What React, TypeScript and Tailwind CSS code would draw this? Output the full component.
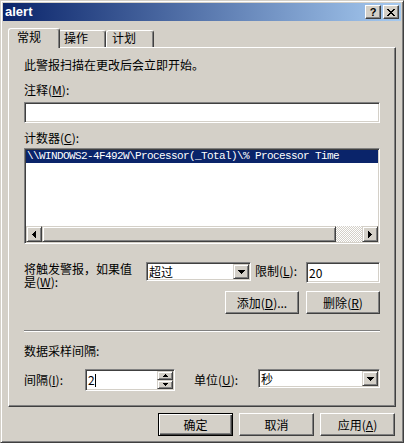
const cjk = "font-['Noto_Sans_CJK_SC',sans-serif] text-[12px] leading-[12px] text-black"
const sunken =
  "border border-t-[#808080] border-l-[#808080] border-r-white border-b-white shadow-[inset_1px_1px_0_#404040,inset_-1px_-1px_0_#d4d0c8]"
const bevel =
  "border border-t-[#d4d0c8] border-l-[#d4d0c8] border-r-[#404040] border-b-[#404040] bg-[#d4d0c8] shadow-[inset_1px_1px_0_#ffffff,inset_-1px_-1px_0_#808080]"
const pushButton =
  "flex items-center justify-center border border-t-white border-l-white border-r-[#404040] border-b-[#404040] bg-[#d4d0c8] shadow-[inset_-1px_-1px_0_#808080]"

// pixel glyphs for the little arrows
const DOWN = "M0 0h7v1H0zM1 1h5v1H1zM2 2h3v1H2zM3 3h1v1H3z"
const LEFT = "M3 0h1v7H3zM2 1h1v5H2zM1 2h1v3H1zM0 3h1v1H0z"
const RIGHT = "M0 0h1v7H0zM1 1h1v5H1zM2 2h1v3H2zM3 3h1v1H3z"
const UP_S = "M2 0h1v1H2zM1 1h3v1H1zM0 2h5v1H0z"
const DOWN_S = "M0 0h5v1H0zM1 1h3v1H1zM2 2h1v1H2z"
const CLOSE =
  "M0 0h2v1H0zM6 0h2v1H6zM1 1h2v1H1zM5 1h2v1H5zM2 2h4v1H2zM3 3h2v1H3zM2 4h4v1H2zM1 5h2v1H1zM5 5h2v1H5zM0 6h2v1H0zM6 6h2v1H6z"

const Glyph = ({ w, h, d }: { w: number; h: number; d: string }) => (
  <svg width={w} height={h} viewBox={`0 0 ${w} ${h}`} shapeRendering="crispEdges">
    <path d={d} fill="#000" />
  </svg>
)

const Key = ({ k }: { k: string }) => (
  <>
    (<span className="underline">{k}</span>)
  </>
)

const ComboBox = ({ value, className }: { value: string; className: string }) => (
  <div className={`${sunken} flex h-[19px] bg-white ${className}`}>
    <div className={`${cjk} flex flex-1 items-center pl-[2px]`}>{value}</div>
    <div className={`${bevel} my-[1px] mr-[1px] flex w-[16px] items-center justify-center`}>
      <Glyph w={7} h={4} d={DOWN} />
    </div>
  </div>
)

const tabBase = `${cjk} border-l border-t border-r border-l-white border-t-white border-r-[#404040] rounded-t-[3px] bg-[#d4d0c8] shadow-[inset_-1px_0_0_#808080]`

export default function App() {
  return (
    <div className="flex h-[443px] w-[404px] flex-col border border-t-[#d4d0c8] border-l-[#d4d0c8] border-r-[#404040] border-b-[#404040] bg-[#d4d0c8] p-[2px] shadow-[inset_1px_1px_0_#ffffff,inset_-1px_-1px_0_#808080]">
      {/* title bar */}
      <div className="flex h-[18px] items-center bg-[linear-gradient(to_right,#0a246a,#a6caf0)] pl-[2px] pr-[2px]">
        <span className="flex-1 font-['Liberation_Sans',Arial,sans-serif] text-[13px] font-bold leading-[18px] text-white">
          alert
        </span>
        <div className="flex gap-[2px]">
          <div className={`${pushButton} h-[14px] w-[16px] font-['Liberation_Sans',Arial,sans-serif] text-[11px] font-bold leading-[12px] text-black`}>
            ?
          </div>
          <div className={`${pushButton} h-[14px] w-[16px]`}>
            <Glyph w={8} h={7} d={CLOSE} />
          </div>
        </div>
      </div>

      {/* tabs */}
      <div className="flex h-[26px] items-end pl-[7px]">
        <div className={`${tabBase} relative z-10 -mx-[2px] -mb-[1px] h-[20px] w-[52px] pl-[8px] pt-[2px]`}>常规</div>
        <div className={`${tabBase} h-[17px] w-[48px] pl-[5px] pt-[1px]`}>操作</div>
        <div className={`${tabBase} h-[17px] w-[48px] pl-[5px] pt-[1px]`}>计划</div>
      </div>

      {/* tab page */}
      <div className="ml-[5px] flex h-[360px] w-[388px] flex-col border border-t-white border-l-white border-r-[#404040] border-b-[#404040] px-[15px] pt-[11px] shadow-[inset_-1px_-1px_0_#808080]">
        <div className={cjk}>此警报扫描在更改后会立即开始。</div>

        <div className={`${cjk} mt-[13px]`}>
          注释<Key k="M" />:
        </div>
        <div className={`${sunken} mt-[6px] h-[21px] bg-white`} />

        <div className={`${cjk} mt-[9px]`}>
          计数器<Key k="C" />:
        </div>
        <div className={`${sunken} mt-[4px] flex h-[96px] flex-col bg-white p-[1px]`}>
          <div className="flex-1">
            <div className="h-[13px] whitespace-nowrap bg-[#0a246a] pl-[1px] font-['Liberation_Mono',monospace] text-[11px] leading-[13px] tracking-[-0.6px] text-white">
              {"\\\\WINDOWS2-4F492W\\Processor(_Total)\\% Processor Time"}
            </div>
          </div>
          <div className="flex h-[16px]">
            <div className={`${bevel} flex w-[16px] items-center justify-center`}>
              <Glyph w={4} h={7} d={LEFT} />
            </div>
            <div className={`${bevel} w-[294px]`} />
            <div className="flex-1 bg-[repeating-conic-gradient(#d4d0c8_0_25%,#ffffff_0_50%)] bg-[length:2px_2px]" />
            <div className={`${bevel} flex w-[16px] items-center justify-center`}>
              <Glyph w={4} h={7} d={RIGHT} />
            </div>
          </div>
        </div>

        {/* trigger row */}
        <div className="mt-[18px] flex h-[26px] items-start">
          <div className={`${cjk} w-[122px] leading-[13px]`}>
            将触发警报，如果值
            <br />
            是<Key k="W" />:
          </div>
          <ComboBox value="超过" className="w-[105px]" />
          <div className={`${cjk} ml-[4px] mt-[3px] flex-1`}>
            限制<Key k="L" />:
          </div>
          <div className={`${sunken} flex h-[21px] w-[74px] items-center bg-white pl-[2px]`}>
            <span className={cjk}>20</span>
          </div>
        </div>

        <div className="mt-[3px] flex justify-end gap-[7px]">
          <div className={`${pushButton} h-[23px] w-[74px]`}>
            <span className={cjk}>
              添加<Key k="D" />...
            </span>
          </div>
          <div className={`${pushButton} h-[23px] w-[74px]`}>
            <span className={cjk}>
              删除<Key k="R" />
            </span>
          </div>
        </div>

        <div className="mt-[16px] h-[2px] border-t border-b border-t-[#808080] border-b-white" />

        <div className={`${cjk} mt-[13px]`}>数据采样间隔:</div>

        <div className="mt-[12px] flex items-start">
          <div className={`${cjk} mt-[5px] w-[61px]`}>
            间隔<Key k="I" />:
          </div>
          <div className={`${sunken} flex h-[22px] w-[90px] bg-white`}>
            <div className="flex flex-1 items-center pl-[2px]">
              <span className={cjk}>2</span>
              <span className="h-[13px] w-px bg-black" />
            </div>
            <div className="my-[1px] mr-[1px] flex w-[16px] flex-col">
              <div className={`${bevel} flex flex-1 items-center justify-center`}>
                <Glyph w={5} h={3} d={UP_S} />
              </div>
              <div className={`${bevel} flex flex-1 items-center justify-center`}>
                <Glyph w={5} h={3} d={DOWN_S} />
              </div>
            </div>
          </div>
          <div className={`${cjk} ml-[19px] mt-[5px] flex-1`}>
            单位<Key k="U" />:
          </div>
          <ComboBox value="秒" className="w-[122px]" />
        </div>
      </div>

      {/* dialog buttons */}
      <div className="flex justify-end gap-[6px] pr-[6px] pt-[6px]">
        <div className="flex h-[23px] w-[75px] items-center justify-center border border-black bg-[#d4d0c8] shadow-[inset_1px_1px_0_#ffffff,inset_-1px_-1px_0_#404040,inset_-2px_-2px_0_#808080]">
          <span className={cjk}>确定</span>
        </div>
        <div className={`${pushButton} h-[23px] w-[75px]`}>
          <span className={cjk}>取消</span>
        </div>
        <div className={`${pushButton} h-[23px] w-[75px]`}>
          <span className={cjk}>
            应用<Key k="A" />
          </span>
        </div>
      </div>
    </div>
  )
}
